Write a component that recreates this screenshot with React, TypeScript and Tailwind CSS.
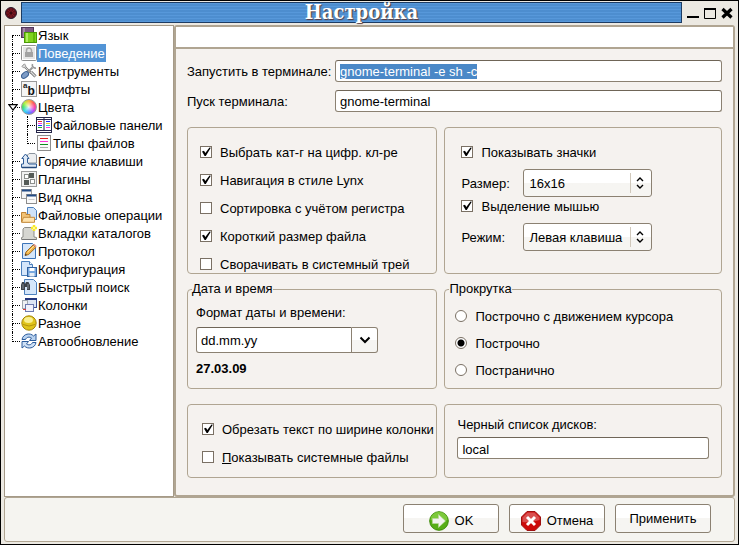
import { useEffect, useRef, type ReactNode } from "react";
import clsx from "clsx";

const Svg = ({ children }: { children: ReactNode }) => (
  <svg viewBox="0 0 16 16" className="size-4 shrink-0" aria-hidden="true">
    {children}
  </svg>
);

const icons: Record<string, ReactNode> = {
  language: (
    <Svg>
      <rect x="0.5" y="0.5" width="12" height="10" fill="#7d5b83" stroke="#50365a" />
      <path d="M3 1v9" stroke="#a58bac" strokeWidth="2" />
      <rect x="3.5" y="5.5" width="12" height="10" fill="#7fd320" stroke="#4a9a06" />
      <path d="M6 6v9" stroke="#b0ee62" strokeWidth="2" />
      <path d="M13 6v9" stroke="#62b80c" strokeWidth="2" />
    </Svg>
  ),
  lock: (
    <Svg>
      <rect x="0.5" y="0.5" width="15" height="15" rx="1" fill="#e6e6e6" stroke="#8f8f8f" />
      <rect x="1.5" y="1.5" width="13" height="13" fill="none" stroke="#fff" />
      <path d="M5.500 8V5.500a2.500 2.500 0 0 1 5 0V8" fill="none" stroke="#a6a6a6" strokeWidth="1.500" />
      <rect x="4" y="7" width="8" height="5" fill="#a3a3a3" />
    </Svg>
  ),
  tools: (
    <Svg>
      <path d="M2 2l8 8" stroke="#777" strokeWidth="2" />
      <path d="M2 2l8 8" stroke="#e8e8e8" strokeWidth=".8" />
      <path d="M.8 3.600L3.600.8 5 3.200 3.200 5z" fill="#ddd" stroke="#888" strokeWidth=".7" />
      <path d="M10 9l4.500 4.500" stroke="#666" strokeWidth="3" />
      <path d="M10 9l4.500 4.500" stroke="#ddd" strokeWidth="1.400" />
      <path d="M6 10l5.500-5.500" stroke="#999" strokeWidth="2" />
      <path d="M11.500 1a3 3 0 0 0 3.500 4" fill="none" stroke="#999" strokeWidth="1.600" />
      <ellipse cx="4" cy="12" rx="4" ry="2.600" transform="rotate(-40 4 12)" fill="#7d9cc6" stroke="#3a5f92" />
    </Svg>
  ),
  fonts: (
    <Svg>
      <rect x="0.5" y="0.5" width="15" height="15" fill="#f5f5f5" stroke="#999" />
      <text x="2" y="7" fontSize="8" fontWeight="700" fill="#222" fontFamily="Liberation Sans, sans-serif">a</text>
      <text x="6.500" y="13.500" fontSize="12" fontWeight="700" fill="#111" fontFamily="Liberation Sans, sans-serif">b</text>
    </Svg>
  ),
  colors: (
    <span className="size-4 shrink-0 rounded-full border border-[#9a9a9a] bg-[radial-gradient(circle,#ffffffdd,#ffffff00_60%),conic-gradient(#ffb23e,#ff5a5a,#ff3ea5,#b14dff,#3f8bff,#36d6f0,#3fe06a,#b6f03c,#ffb23e)]" />
  ),
  panels: (
    <Svg>
      <rect x="0.5" y="0.5" width="15" height="15" fill="#fff" stroke="#26264a" />
      <path d="M0 2.500h16M8 1v12M0 13.500h16" stroke="#26264a" />
      <path d="M2 4.500h4" stroke="#e03030" />
      <path d="M2 6.500h4M10 10.500h4" stroke="#ff38e0" />
      <path d="M2 8.500h4M10 4.500h4" stroke="#2030ff" />
      <path d="M2 10.500h4" stroke="#20b030" />
      <path d="M10 6.500h4" stroke="#e8d020" />
      <path d="M10 8.500h4" stroke="#20c8e0" />
    </Svg>
  ),
  types: (
    <Svg>
      <rect x="1.500" y="0.5" width="13" height="15" fill="#fbfbfb" stroke="#8d8d8d" />
      <path d="M4 3.500h8" stroke="#e02020" />
      <path d="M4 6.500h8" stroke="#ff30d8" />
      <path d="M4 9.500h8" stroke="#108a20" />
      <path d="M4 12.500h8" stroke="#aaa" />
    </Svg>
  ),
  hotkeys: (
    <Svg>
      <path d="M6.500 10V2L8 .5h6l1.500 1.500v8z" fill="#eceef0" stroke="#8b949e" />
      <path d="M.5 14.500V11h2V5.500H.8L4.500 1 8 5.500H6.500v4.200L8 11h7.500v3.500z" fill="#dfe9f5" stroke="#2f5c97" />
      <path d="M1 14.500h14.500" stroke="#24497b" strokeWidth="1.500" />
    </Svg>
  ),
  plugins: (
    <Svg>
      <rect x="0.5" y="0.5" width="15" height="15" fill="#f1f1f1" stroke="#9a9a9a" />
      <rect x="3.500" y="3.500" width="4" height="4" fill="#fff" stroke="#8c8f8c" />
      <rect x="8" y="2" width="5" height="5" fill="#555b57" />
      <rect x="3" y="9" width="5" height="5" fill="#555b57" />
      <rect x="9.500" y="8.500" width="4" height="4" fill="#fff" stroke="#8c8f8c" />
    </Svg>
  ),
  windows: (
    <Svg>
      <rect x="0.5" y="0.5" width="10" height="9" fill="#f4f4f4" stroke="#999" />
      <path d="M1 1.500h9" stroke="#244c86" strokeWidth="2" />
      <rect x="5.500" y="5.500" width="10" height="9" fill="#fafafa" stroke="#8c8c8c" />
      <path d="M6 6.500h9" stroke="#244c86" strokeWidth="2" />
      <path d="M7.500 10.500h6" stroke="#ccc" />
    </Svg>
  ),
  fileops: (
    <Svg>
      <path d="M6.500.5h6l3 3v9h-9z" fill="#cfe2f8" stroke="#4c80bd" />
      <path d="M.5 15V5.500h4.500v2h4v7.500z" fill="#f2c377" stroke="#c08436" />
      <path d="M.7 15.300l1.800-5h11v5z" fill="#ffe2ab" stroke="#c58d3f" />
    </Svg>
  ),
  tabs: (
    <Svg>
      <path d="M.5 14.500v-2l1.500-.5V4l1.500-1.500h8L13 4v8l2.500.5v2z" fill="#d6d6d1" stroke="#8e8e89" />
      <path d="M1 14.500h14.500" stroke="#777" />
      <path d="M13 0v6M10 3h6" stroke="#f7ea28" strokeWidth="2.500" />
      <path d="M11 1l4 4M15 1l-4 4" stroke="#fff59a" />
    </Svg>
  ),
  log: (
    <Svg>
      <path d="M1.500.5h10l3 3v12h-13z" fill="#d5e6fa" stroke="#3c74b8" />
      <path d="M4 12.500l1-3.500L12 2l2.700 2.500-7 7z" fill="#f0b347" stroke="#9a6a25" />
      <path d="M12 2l1.300-1.200L15.700 3 14.700 4.500z" fill="#e59a86" />
      <path d="M6.500 9.500L13 3" stroke="#ffdf94" />
      <path d="M4 12.500l.5-1.800 1.500 1.300z" fill="#333" />
    </Svg>
  ),
  config: (
    <Svg>
      <path d="M.5.500h8l3 3v11H.5z" fill="#d5e6fa" stroke="#4c80bd" />
      <path d="M8.500.5v3h3" fill="#fff" stroke="#4c80bd" />
      <rect x="6.500" y="6.500" width="9" height="9" fill="#78a8df" stroke="#31619f" />
      <rect x="8.500" y="7" width="5" height="3" fill="#fff" />
      <rect x="8.500" y="12" width="5" height="3.500" fill="#e6edf5" />
    </Svg>
  ),
  search: (
    <Svg>
      <path d="M3.500.5h9l3 3v12h-12z" fill="#d5e6fa" stroke="#4c80bd" />
      <path d="M0 6l1-3h2l1 2 1-2h2.500l1.500 3v5H6V8H4v3H0z" fill="#3d4248" />
      <path d="M2 5v5M7 5v5" stroke="#858c94" />
    </Svg>
  ),
  columns: (
    <Svg>
      <rect x="4.500" y="1.500" width="11" height="9" fill="#dce5f4" stroke="#374f94" />
      <path d="M4 2h12" stroke="#22357c" strokeWidth="2" />
      <rect x="1.500" y="3.500" width="5" height="8" fill="#eef0f2" stroke="#a0a7ae" />
      <rect x="4.500" y="7.500" width="8" height="7" fill="#f0f0fa" stroke="#6d7ab0" />
      <path d="M2 12.500h3" stroke="#d63b3b" />
    </Svg>
  ),
  misc: (
    <Svg>
      <circle cx="8" cy="8" r="7.200" fill="#e0c41c" stroke="#a58505" />
      <ellipse cx="7.500" cy="5" rx="4.500" ry="3" fill="#f9ef91" />
      <path d="M2 9.500q6 3 12 0" fill="none" stroke="#b4930b" />
    </Svg>
  ),
  refresh: (
    <Svg>
      <path d="M1 6.500C2 .5 9.500-.5 12.500 3L15 1v6.500H8.500L10.500 5C8.500 3.500 5.500 4 4.500 6.500z" fill="#b9d3f1" stroke="#2c5c9c" />
      <path d="M15 9.500c-1 6-8.500 7-11.500 3.500L1 15V8.500h6.500L5.500 11c2 1.500 5 1 6-1.500z" fill="#cfe1f6" stroke="#2c5c9c" />
    </Svg>
  ),
};

type Item = { label: string; icon: string; children?: Item[] };

const tree: Item[] = [
  { label: "Язык", icon: "language" },
  { label: "Поведение", icon: "lock" },
  { label: "Инструменты", icon: "tools" },
  { label: "Шрифты", icon: "fonts" },
  {
    label: "Цвета",
    icon: "colors",
    children: [
      { label: "Файловые панели", icon: "panels" },
      { label: "Типы файлов", icon: "types" },
    ],
  },
  { label: "Горячие клавиши", icon: "hotkeys" },
  { label: "Плагины", icon: "plugins" },
  { label: "Вид окна", icon: "windows" },
  { label: "Файловые операции", icon: "fileops" },
  { label: "Вкладки каталогов", icon: "tabs" },
  { label: "Протокол", icon: "log" },
  { label: "Конфигурация", icon: "config" },
  { label: "Быстрый поиск", icon: "search" },
  { label: "Колонки", icon: "columns" },
  { label: "Разное", icon: "misc" },
  { label: "Автообновление", icon: "refresh" },
];

function Guide({ first, last }: { first?: boolean; last?: boolean }) {
  return (
    <span className="flex h-[18px] w-2 shrink-0 flex-col" aria-hidden="true">
      <span className={clsx("h-[10px] border-b border-dotted border-black", !first && "border-l")} />
      <span className={clsx("h-2 border-dotted border-black", !last && "border-l")} />
    </span>
  );
}

function TreeRow({ item, first, last }: { item: Item; first?: boolean; last?: boolean }) {
  const selected = item.label === "Поведение";
  return (
    <div className="relative flex h-[18px] items-center">
      <Guide first={first} last={last} />
      {item.children && (
        <svg viewBox="0 0 10 7" className="absolute top-1.5 -left-1 h-[7px] w-[10px]" aria-hidden="true">
          <path d="M.8.600h8.400L5 6z" fill="#fff" stroke="#000" strokeWidth="1.200" />
        </svg>
      )}
      <span className="ml-px flex">{icons[item.icon]}</span>
      <span className={clsx("h-[18px] px-px leading-5 whitespace-nowrap", selected && "bg-[#5294d6] text-white")}>
        {item.label}
      </span>
    </div>
  );
}

function Tree() {
  return (
    <ul role="tree" aria-label="Разделы" className="w-[170px] shrink-0 border border-[#a59a88] bg-white pl-[7px]">
      {tree.map((item, i) => (
        <li key={item.label} role="treeitem" aria-selected={item.label === "Поведение"}>
          <TreeRow item={item} first={i === 0} last={i === tree.length - 1} />
          {item.children && (
            <ul role="group" className="border-l border-dotted border-black pl-[14px]">
              {item.children.map((child, j) => (
                <li key={child.label} role="treeitem" aria-selected={false}>
                  <TreeRow item={child} last={j === item.children!.length - 1} />
                </li>
              ))}
            </ul>
          )}
        </li>
      ))}
    </ul>
  );
}

function Check({ children, checked }: { children: ReactNode; checked?: boolean }) {
  return (
    <label className="flex h-4 items-center gap-2">
      <span className="relative flex size-3">
        <input
          type="checkbox"
          defaultChecked={checked}
          className="peer size-3 appearance-none border border-[#7a7064] bg-white"
        />
        <svg viewBox="0 0 12 12" className="pointer-events-none absolute inset-0 hidden size-3 peer-checked:block" aria-hidden="true">
          <path d="M2 5.500l2-.8L5.300 7 9.500 1.500l1.300.3L5.800 10H4.600z" fill="#000" />
        </svg>
      </span>
      <span className="pt-0.5 whitespace-nowrap">{children}</span>
    </label>
  );
}

function Radio({ children, checked }: { children: ReactNode; checked?: boolean }) {
  return (
    <label className="flex h-4 items-center gap-2">
      <input
        type="radio"
        name="scroll"
        defaultChecked={checked}
        className="size-3 appearance-none rounded-full border border-[#7a7064] bg-white checked:bg-[radial-gradient(circle,#000_3px,#fff_4px)]"
      />
      <span className="pt-0.5 whitespace-nowrap">{children}</span>
    </label>
  );
}

function Dropdown({ id, label, options }: { id: string; label: string; options: string[] }) {
  return (
    <div className="flex h-7 items-center">
      <label htmlFor={id} className="w-[63px] shrink-0 pt-0.5 pr-1">
        {label}
      </label>
      <div className="relative -ml-px">
        <select
          id={id}
          className="h-7 w-[129px] appearance-none rounded-[3px] border border-[#8b8172] bg-linear-to-b from-white from-50% to-[#f6f5f2] to-50% pt-0.5 pl-[5px]"
        >
          {options.map((o) => (
            <option key={o}>{o}</option>
          ))}
        </select>
        <span className="pointer-events-none absolute top-1 right-0 flex h-5 w-[22px] items-center justify-center border-l border-[#d0c8bb] pr-1">
          <svg viewBox="0 0 8 12" className="h-3 w-2" fill="none" stroke="#000" strokeWidth="1.400" aria-hidden="true">
            <path d="M1 4l3-3 3 3M1 8l3 3 3-3" />
          </svg>
        </span>
      </div>
    </div>
  );
}

const field = "rounded-[3px] border border-[#8b8172] border-t-[#6f6557] bg-white px-1 leading-4 outline-none";
const group = "min-w-0 rounded-[4px] border border-[#b0a592]";
const button =
  "flex h-[29px] w-24 items-center justify-center gap-1.5 rounded-[3px] border border-[#8b8172] bg-linear-to-b from-white from-50% to-[#f6f5f2] to-50%";

export default function App() {
  const command = useRef<HTMLInputElement>(null);
  useEffect(() => {
    command.current?.focus();
    command.current?.select();
  }, []);

  return (
    <div className="flex min-h-screen flex-col border border-black bg-[#ece9e2] font-['Liberation_Sans',Arial,sans-serif] text-[13px] leading-4 text-black">
      <header className="flex items-center pt-px pr-1 pl-1">
        <svg viewBox="0 0 12 12" className="mr-1 size-3 shrink-0" aria-hidden="true">
          <circle cx="6" cy="6" r="5.500" fill="#5d0f1a" stroke="#2b1a2c" />
          <path d="M6 1v10M1 6h10M2.500 2.500l7 7M9.500 2.500l-7 7" stroke="#8d1c26" strokeWidth=".8" />
          <circle cx="6" cy="6" r="1.500" fill="#3a0710" />
        </svg>
        <h1 className="h-[21px] flex-1 border border-[#1d3c63] bg-[repeating-linear-gradient(to_bottom,#5798da_0px,#5798da_1px,#4383c4_2px,#5798da_3px)] pl-5 text-center font-['DejaVu_Serif_Condensed','DejaVu_Serif',serif] text-[20px] leading-[19px] font-bold text-white [text-shadow:1px_1px_1px_#5a3a3a]">
          Настройка
        </h1>
        <div className="flex items-center gap-1 pl-1">
          <button type="button" aria-label="Свернуть">
            <svg viewBox="0 0 14 14" className="size-[14px]">
              <path d="M1 11h12" stroke="#000" strokeWidth="2" />
            </svg>
          </button>
          <button type="button" aria-label="Развернуть">
            <svg viewBox="0 0 12 14" className="h-[14px] w-3">
              <path d="M.5 3v9.500h11V3" fill="none" stroke="#000" />
              <path d="M0 3h12" stroke="#000" strokeWidth="2" />
            </svg>
          </button>
          <button type="button" aria-label="Закрыть">
            <svg viewBox="0 0 14 14" className="size-[14px]">
              <path d="M2.500 3l9 8.500M11.500 3l-9 8.500" stroke="#000" strokeWidth="3.200" />
            </svg>
          </button>
        </div>
      </header>

      <div className="mx-[3px] mt-0.5 flex flex-1">
        <Tree />
        <main className="flex flex-1 flex-col rounded-[3px] border-2 border-[#b0a592] bg-[#f5f2ef]">
          <div className="h-[22px] border-b-2 border-[#b0a592] bg-white" />
          <div className="flex flex-col pt-[11px] pr-[11px] pb-4 pl-[11px]">
            <div className="grid grid-cols-[148px_1fr] items-center gap-y-2">
              <label htmlFor="run" className="pt-0.5">
                Запустить в терминале:
              </label>
              <input
                id="run"
                ref={command}
                defaultValue="gnome-terminal -e sh -c"
                className={clsx(field, "h-[22px] selection:bg-[#4a88c7] selection:text-white")}
              />
              <label htmlFor="start" className="pt-0.5">
                Пуск терминала:
              </label>
              <input id="start" defaultValue="gnome-terminal" className={clsx(field, "h-[22px]")} />
            </div>

            <div className="mt-[15px] grid grid-cols-[250fr_277fr] gap-x-[7px]">
              <div className={clsx(group, "flex flex-col gap-3 pt-4 pb-px pl-3")}>
                <Check checked>Выбрать кат-г на цифр. кл-ре</Check>
                <Check checked>Навигация в стиле Lynx</Check>
                <Check>Сортировка с учётом регистра</Check>
                <Check checked>Короткий размер файла</Check>
                <Check>Сворачивать в системный трей</Check>
              </div>
              <div className={clsx(group, "flex flex-col pt-4 pl-4")}>
                <Check checked>Показывать значки</Check>
                <div className="mt-[9px] mb-px">
                  <Dropdown id="size" label="Размер:" options={["16x16", "32x32"]} />
                </div>
                <Check checked>Выделение мышью</Check>
                <div className="mt-[9px]">
                  <Dropdown id="mode" label="Режим:" options={["Левая клавиша", "Правая клавиша"]} />
                </div>
              </div>
            </div>

            <div className="mt-[7px] grid grid-cols-[250fr_277fr] gap-x-[7px]">
              <fieldset className={clsx(group, "px-1 pb-[11px]")}>
                <legend>Дата и время</legend>
                <div className="flex flex-col pt-2 pl-1">
                  <label htmlFor="format">Формат даты и времени:</label>
                  <div className="mt-1.5 flex h-[26px] w-[182px]">
                    <input id="format" defaultValue="dd.mm.yy" className={clsx(field, "min-w-0 flex-1 rounded-r-none pt-0.5")} />
                    <button
                      type="button"
                      aria-label="Выбрать формат"
                      className="flex w-[26px] items-center justify-center rounded-r-[3px] border border-l-0 border-[#8b8172] bg-linear-to-b from-white from-50% to-[#f6f5f2] to-50%"
                    >
                      <svg viewBox="0 0 12 8" className="h-2 w-3" fill="none" stroke="#000" strokeWidth="2" aria-hidden="true">
                        <path d="M1.500 1.500L6 6l4.500-4.500" />
                      </svg>
                    </button>
                  </div>
                  <output className="mt-2 font-bold">27.03.09</output>
                </div>
              </fieldset>
              <fieldset className={clsx(group, "px-1")}>
                <legend>Прокрутка</legend>
                <div className="flex flex-col gap-[11px] pt-[11px] pl-1.5">
                  <Radio>Построчно с движением курсора</Radio>
                  <Radio checked>Построчно</Radio>
                  <Radio>Постранично</Radio>
                </div>
              </fieldset>
            </div>

            <div className="mt-[15px] grid grid-cols-[250fr_277fr] gap-x-[7px]">
              <div className={clsx(group, "flex flex-col gap-3 pt-4 pb-3 pl-[14px]")}>
                <Check checked>Обрезать текст по ширине колонки</Check>
                <Check>
                  <u>П</u>оказывать системные файлы
                </Check>
              </div>
              <div className={clsx(group, "flex flex-col gap-1 pt-3 pr-3 pl-3")}>
                <label htmlFor="disks">Черный список дисков:</label>
                <input id="disks" defaultValue="local" className={clsx(field, "h-[22px] pt-0.5")} />
              </div>
            </div>
          </div>
        </main>
      </div>

      <footer className="mx-[3px] mb-0.5 flex justify-end gap-[10px] rounded-[3px] border border-[#b0a592] bg-[#f5f4f0] pt-1.5 pr-[23px] pb-2">
        <button type="button" className={button}>
          <svg viewBox="0 0 20 20" className="mt-1 size-5" aria-hidden="true">
            <circle cx="10" cy="10" r="9.300" fill="#57ad16" stroke="#3c8a08" />
            <path d="M1.500 9a8.500 8 0 0 1 17 0q-8 3-17 0z" fill="#7cc93a" />
            <path d="M3.500 7.500h6v-4l7 6.500-7 6.500v-4h-6z" fill="#f2f2ee" stroke="#b9d79c" strokeWidth=".6" />
          </svg>
          <span className="pt-1">OK</span>
        </button>
        <button type="button" className={button}>
          <svg viewBox="0 0 20 20" className="mt-1 size-5" aria-hidden="true">
            <path d="M6 .5h8L19.500 6v8L14 19.500H6L.5 14V6z" fill="#cc0a0a" stroke="#9e1010" />
            <path d="M6.500 1.500h7L18.500 6.500V9q-9 3-17 2V6.500z" fill="#d95050" />
            <path d="M6 6l8 8M14 6l-8 8" stroke="#fff" strokeWidth="3" />
          </svg>
          <span className="pt-1">Отмена</span>
        </button>
        <button type="button" className={button}>
          Применить
        </button>
      </footer>
    </div>
  );
}
